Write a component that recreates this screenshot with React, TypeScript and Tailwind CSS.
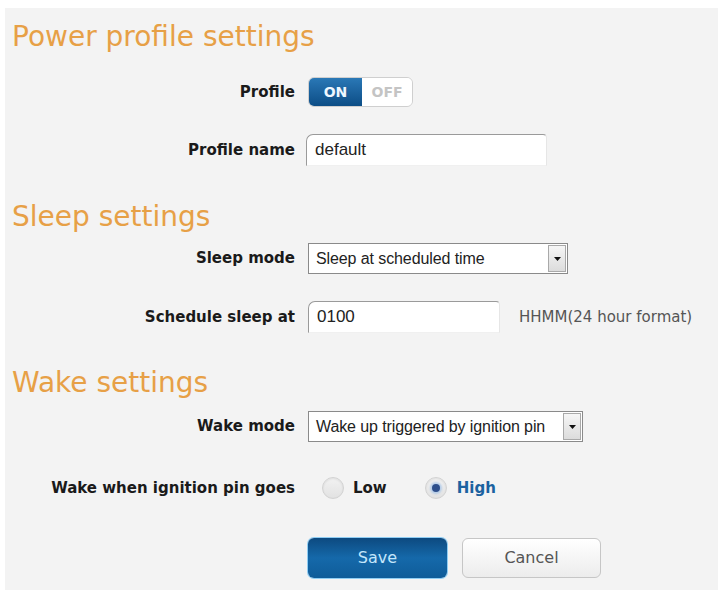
import React from "react";

const labelFont = { fontFamily: '"DejaVu Sans", Verdana, sans-serif' };
const fieldFont = { fontFamily: '"Liberation Sans", Arial, sans-serif' };

function SectionTitle({ children, className = "" }: { children: React.ReactNode; className?: string }) {
  return (
    <h2 className={`h-[28px] pl-[7px] text-[28px] leading-[28px] font-normal text-[#e7a046] ${className}`} style={labelFont}>
      {children}
    </h2>
  );
}

function Row({ label, className = "", children }: { label: string; className?: string; children: React.ReactNode }) {
  return (
    <div className={`flex items-center ${className}`}>
      <div className="w-[290px] shrink-0 text-right text-[15px] font-bold text-[#1a1a1a]" style={labelFont}>
        {label}
      </div>
      <div className="ml-[13px] flex h-full items-center">{children}</div>
    </div>
  );
}

function TextBox({ value, width }: { value: string; width: string }) {
  return (
    <div
      className={`flex h-full items-center rounded-tl-[7px] rounded-tr-[4px] border border-t-[#9a9a9a] border-l-[#9a9a9a] border-r-[#e6e6e6] border-b-[#f0f0f0] bg-white pl-[8px] text-[17px] text-[#222] ${width}`}
      style={fieldFont}
    >
      {value}
    </div>
  );
}

function Select({ value, width }: { value: string; width: string }) {
  return (
    <div className={`flex h-full items-stretch border border-[#8a8a8a] bg-white p-[1px] ${width}`} style={fieldFont}>
      <div className="flex flex-1 items-center overflow-hidden whitespace-nowrap pl-[6px] text-[16px] tracking-[-0.1px] text-[#222]">{value}</div>
      <div className="flex w-[18px] items-center justify-center border border-[#a9a9a9] bg-linear-to-b from-[#f6f6f6] to-[#dcdcdc]">
        <svg width="7" height="4" viewBox="0 0 7 4">
          <path d="M0 0h7L3.5 4z" fill="#111" />
        </svg>
      </div>
    </div>
  );
}

function Radio({ checked }: { checked?: boolean }) {
  return (
    <span className="flex h-[22px] w-[22px] items-center justify-center rounded-full border border-[#d2d2d2] bg-linear-to-b from-[#f2f2f2] to-[#e2e2e2] shadow-[inset_0_1px_2px_rgba(0,0,0,0.08)]">
      {checked && <span className="h-[8px] w-[8px] rounded-full bg-[#2e4f8c] shadow-[0_0_2px_2px_rgba(120,170,230,0.45)]" />}
    </span>
  );
}

export default function App() {
  return (
    <div className="min-h-[590px] w-[723px] bg-white pt-[8px] pl-[5px]">
      <div className="h-[582px] w-[713px] bg-[#f3f3f3] pt-[15px]">
        <SectionTitle>Power profile settings</SectionTitle>

        <Row label="Profile" className="mt-[26px] h-[30px]">
          <div className="flex h-[30px] w-[105px] overflow-hidden rounded-[6px] border border-[#cfcfcf] text-[14px] font-bold" style={labelFont}>
            <div className="flex w-[53px] items-center justify-center bg-linear-to-b from-[#2a78b6] to-[#0c4d86] text-[#eef7ff]">ON</div>
            <div className="flex flex-1 items-center justify-center bg-white text-[#c4c4c4]">OFF</div>
          </div>
        </Row>

        <Row label="Profile name" className="mt-[27px] h-[32px]">
          <div className="-ml-[2px] h-full">
            <TextBox value="default" width="w-[241px]" />
          </div>
        </Row>

        <SectionTitle className="mt-[37px]">Sleep settings</SectionTitle>

        <Row label="Sleep mode" className="mt-[12px] h-[31px]">
          <Select value="Sleep at scheduled time" width="w-[260px]" />
        </Row>

        <Row label="Schedule sleep at" className="mt-[27px] h-[32px]">
          <TextBox value="0100" width="w-[192px]" />
          <span className="ml-[19px] text-[15px] text-[#555]" style={labelFont}>
            HHMM(24 hour format)
          </span>
        </Row>

        <SectionTitle className="mt-[36px]">Wake settings</SectionTitle>

        <Row label="Wake mode" className="mt-[14px] h-[31px]">
          <Select value="Wake up triggered by ignition pin" width="w-[275px]" />
        </Row>

        <Row label="Wake when ignition pin goes" className="mt-[34px] h-[24px]">
          <div className="flex items-center text-[15px] font-bold" style={labelFont}>
            <span className="ml-[14px]">
              <Radio />
            </span>
            <span className="ml-[9px] text-[#1a1a1a]">Low</span>
            <span className="ml-[38px]">
              <Radio checked />
            </span>
            <span className="ml-[10px] text-[#1b62a0]">High</span>
          </div>
        </Row>

        <div className="mt-[38px] ml-[303px] flex gap-[15px]" style={labelFont}>
          <button className="h-[40px] w-[139px] rounded-[6px] bg-linear-to-b from-[#0d4a80] via-[#1569aa] to-[#0f5c99] text-[16px] text-[#c4e6fb] shadow-[0_0_0_1px_#8fcdf3]">
            Save
          </button>
          <button className="h-[40px] w-[139px] rounded-[6px] border border-[#c6c6c6] bg-linear-to-b from-white to-[#ececec] text-[16px] text-[#555]">
            Cancel
          </button>
        </div>
      </div>
    </div>
  );
}
